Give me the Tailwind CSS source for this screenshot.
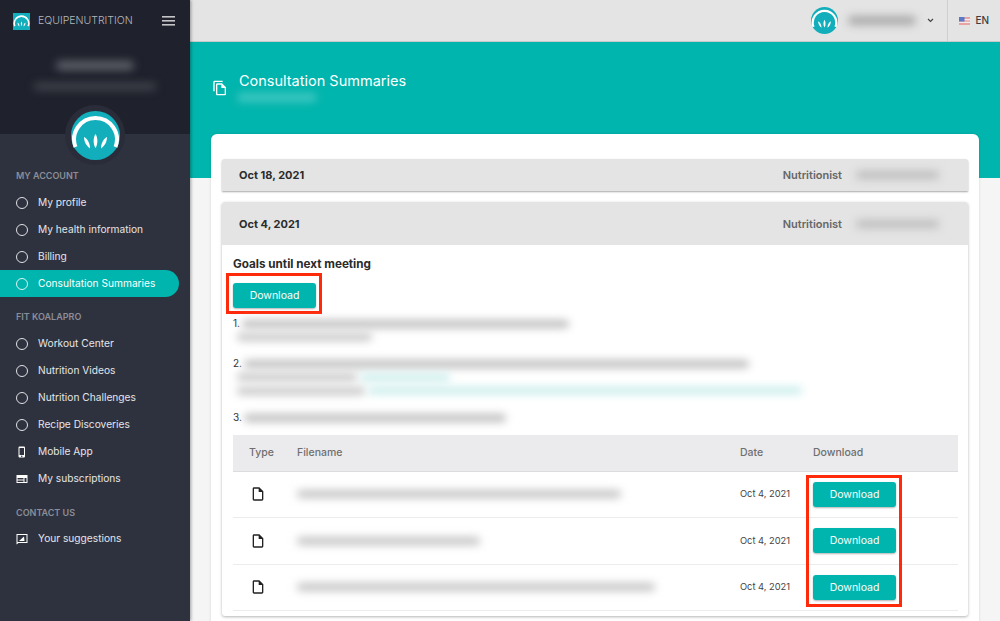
<!DOCTYPE html>
<html lang="en">
<head>
    <meta charset="UTF-8">
    <title>Consultation Summaries</title>
    <script src="https://cdn.jsdelivr.net/npm/@tailwindcss/browser@4"></script>
</head>
<body class="font-['Inter',sans-serif] bg-[#f5f5f5] overflow-hidden">
<div class="flex w-[1000px] h-[621px] overflow-hidden">

    <!-- Sidebar -->
    <aside class="w-[190px] shrink-0 h-full bg-[#2e323f] shadow-[1px_0_3px_rgba(0,0,0,0.35)] z-10 relative">
        <div class="relative h-[134px] bg-[#1f222c]">
            <div class="flex items-center h-[42px] pl-[13px] pr-[15px]">
                <svg class="w-[17px] h-[17px]" viewBox="0 0 48 48"><rect width="48" height="48" fill="#12aebb"/><path d="M5 37A20.500 20.500 0 1 1 43 37" fill="none" stroke="#fff" stroke-width="4.500"/><path d="M24 24C26.500 28 26.500 33 24 37C21.500 33 21.500 28 24 24Z" fill="#fff"/><path d="M13 27C16.500 29 18.500 33 18 38C14.500 35.500 12.500 31.500 13 27Z" fill="#fff"/><path d="M35 27C31.500 29 29.500 33 30 38C33.500 35.500 35.500 31.500 35 27Z" fill="#fff"/></svg>
                <span class="ml-2 text-[10.500px] font-light text-[#b5b7bd]">EQUIPENUTRITION</span>
                <svg class="ml-auto w-[13px] h-[10px]" viewBox="0 0 13 10" fill="#c4c5c9"><rect width="13" height="1.600"/><rect y="4" width="13" height="1.600"/><rect y="8" width="13" height="1.600"/></svg>
            </div>
            <div class="mx-auto mt-[19px] w-[78px] h-[9px] rounded-full bg-[#5f616a] blur-[4px]"></div>
            <div class="mx-auto mt-[13px] w-[122px] h-[7px] rounded-full bg-[#43454e] blur-[4px]"></div>
            <!-- avatar -->
            <div class="absolute left-[65px] top-[105px] w-[60px] h-[60px] rounded-full bg-[#2a2d39] flex items-center justify-center">
                <svg class="w-[49px] h-[49px]" viewBox="0 0 49 49"><circle cx="24.500" cy="24.500" r="24.500" fill="#12aebb"/><path d="M4.500 36A21.400 21.400 0 1 1 44.500 36" fill="none" stroke="#fff" stroke-width="4"/><path d="M24.500 23C27 27 27 33 24.500 37C22 33 22 27 24.500 23Z" fill="#fff"/><path d="M13 26C16.500 28 19 32 19 37.500C15.500 35 13 31 13 26Z" fill="#fff"/><path d="M36 26C32.500 28 30 32 30 37.500C33.500 35 36 31 36 26Z" fill="#fff"/></svg>
            </div>
        </div>

        <nav class="pt-[34px] text-[10.200px] text-[#e4e5e8]">
            <h3 class="h-[14px] leading-[15px] pl-4 text-[9px] font-semibold text-[#8b8e97]">MY ACCOUNT</h3>
            <ul class="mt-[7px]">
                <li class="flex items-center h-[27px] pl-4"><span class="w-3 h-3 rounded-full border-[1.500px] border-white/85"></span><span class="ml-[10px]">My profile</span></li>
                <li class="flex items-center h-[27px] pl-4"><span class="w-3 h-3 rounded-full border-[1.500px] border-white/85"></span><span class="ml-[10px]">My health information</span></li>
                <li class="flex items-center h-[27px] pl-4"><span class="w-3 h-3 rounded-full border-[1.500px] border-white/85"></span><span class="ml-[10px]">Billing</span></li>
                <li class="flex items-center h-[27px] pl-4 w-[179px] bg-[#00b5ad] rounded-r-full text-white"><span class="w-3 h-3 rounded-full border-[1.500px] border-white/85"></span><span class="ml-[10px]">Consultation Summaries</span></li>
            </ul>
            <h3 class="mt-[12px] h-[14px] leading-[15px] pl-4 text-[9px] font-semibold text-[#8b8e97]">FIT KOALAPRO</h3>
            <ul class="mt-[7px]">
                <li class="flex items-center h-[27px] pl-4"><span class="w-3 h-3 rounded-full border-[1.500px] border-white/85"></span><span class="ml-[10px]">Workout Center</span></li>
                <li class="flex items-center h-[27px] pl-4"><span class="w-3 h-3 rounded-full border-[1.500px] border-white/85"></span><span class="ml-[10px]">Nutrition Videos</span></li>
                <li class="flex items-center h-[27px] pl-4"><span class="w-3 h-3 rounded-full border-[1.500px] border-white/85"></span><span class="ml-[10px]">Nutrition Challenges</span></li>
                <li class="flex items-center h-[27px] pl-4"><span class="w-3 h-3 rounded-full border-[1.500px] border-white/85"></span><span class="ml-[10px]">Recipe Discoveries</span></li>
                <li class="flex items-center h-[27px] pl-4">
                    <svg class="w-3 h-3" viewBox="0 0 24 24" fill="#fff"><path d="M15.500 1h-8C6.120 1 5 2.120 5 3.500v17C5 21.880 6.120 23 7.500 23h8c1.380 0 2.500-1.120 2.500-2.500v-17C18 2.120 16.880 1 15.500 1zm-4 21c-.83 0-1.500-.67-1.500-1.500s.67-1.500 1.500-1.500 1.500.67 1.500 1.500-.67 1.500-1.500 1.500zm4.500-4H7V4h9v14z"/></svg>
                    <span class="ml-[10px]">Mobile App</span></li>
                <li class="flex items-center h-[27px] pl-4">
                    <svg class="w-3 h-3" viewBox="0 0 24 24" fill="#fff" fill-rule="evenodd"><path d="M1 4h22v16H1zM3 10v3h12v-3zM3 15v3h12v-3zM17 10v8h4v-8z"/></svg>
                    <span class="ml-[10px]">My subscriptions</span></li>
            </ul>
            <h3 class="mt-[13px] h-[14px] leading-[15px] pl-4 text-[9px] font-semibold text-[#8b8e97]">CONTACT US</h3>
            <ul class="mt-[6px]">
                <li class="flex items-center h-[27px] pl-4">
                    <svg class="w-3 h-3" viewBox="0 0 24 24" fill="#fff" fill-rule="evenodd"><path d="M1 2h22v18H5l-4 3zM3 4v14.500L4.500 18H21V4z"/><path d="M6 16l10-9 1 9z"/></svg>
                    <span class="ml-[10px]">Your suggestions</span></li>
            </ul>
        </nav>
    </aside>

    <!-- Main -->
    <div class="flex-1 min-w-0 h-full">
        <header class="flex items-center justify-end h-[42px] bg-[#e4e4e4] border-b border-[#c9c9c9]">
            <svg class="w-[27px] h-[27px]" viewBox="0 0 49 49"><circle cx="24.500" cy="24.500" r="24.500" fill="#12aebb"/><path d="M4.500 36A21.400 21.400 0 1 1 44.500 36" fill="none" stroke="#fff" stroke-width="4"/><path d="M24.500 23C27 27 27 33 24.500 37C22 33 22 27 24.500 23Z" fill="#fff"/><path d="M13 26C16.500 28 19 32 19 37.500C15.500 35 13 31 13 26Z" fill="#fff"/><path d="M36 26C32.500 28 30 32 30 37.500C33.500 35 36 31 36 26Z" fill="#fff"/></svg>
            <div class="ml-[10px] w-[68px] h-[9px] rounded-full bg-[#a9a9a9] blur-[4px]"></div>
            <svg class="ml-[11px] w-[7px] h-[5px]" viewBox="0 0 7 5" fill="none" stroke="#444" stroke-width="1.200"><path d="M1 1l2.500 2.500L6 1"/></svg>
            <div class="ml-[13px] h-full pl-[11px] pr-[11px] border-l border-[#cfcfcf] flex items-center">
                <svg class="w-[11px] h-[8px] blur-[0.4px]" viewBox="0 0 11 8"><rect width="11" height="8" fill="#e8a3a3"/><rect y="2" width="11" height="1.300" fill="#f4e9e9"/><rect y="4.700" width="11" height="1.300" fill="#f4e9e9"/><rect width="5.500" height="4.500" fill="#5a78c8"/></svg>
                <span class="ml-[5px] text-[10px] font-medium text-[#3d3d3d]">EN</span>
            </div>
        </header>

        <section class="h-[136px] bg-[#00b5ad] pl-[22px] pt-[30px] flex items-start">
            <svg class="mt-[8px] w-4 h-4" viewBox="0 0 24 24" fill="#fff"><path d="M16 1H4c-1.100 0-2 .9-2 2v14h2V3h12V1zm-1 4H8c-1.100 0-1.990.9-1.990 2L6 21c0 1.100.89 2 1.990 2H19c1.100 0 2-.9 2-2V11l-6-6zM8 21V7h6v5h5v9H8z"/></svg>
            <div class="ml-[11px]">
                <h1 class="text-[14.500px] leading-[18px] text-white">Consultation Summaries</h1>
                <div class="-ml-[2px] mt-[3px] w-[80px] h-[9px] rounded-full bg-white/25 blur-[4px]"></div>
            </div>
        </section>

        <main class="relative -mt-[44px] mx-[21px] h-[600px] bg-white rounded-t-[6px] px-[11px] pt-[25px] shadow-[0_0_3px_rgba(0,0,0,0.12)]">
            <div class="flex items-center justify-between h-[32px] pl-[17px] pr-[29px] bg-[#e4e4e4] rounded-t-[3px] shadow-[0_1px_2px_rgba(0,0,0,0.35)]">
                <span class="text-[11px] font-bold text-[#2b2b2b]">Oct 18, 2021</span>
                <div class="flex items-center"><span class="text-[11px] font-semibold text-[#666]">Nutritionist</span><div class="ml-[14px] w-[83px] h-[8px] rounded-full bg-[#bdbdbd] blur-[4px]"></div></div>
            </div>

            <div class="mt-[11px] w-[746px] h-[414px] rounded-[3px] shadow-[0_1px_3px_rgba(0,0,0,0.3)] bg-white">
                <div class="flex items-center justify-between h-[43px] pt-[1px] pl-[17px] pr-[29px] bg-[#e4e4e4] rounded-t-[3px]">
                    <span class="text-[11px] font-bold text-[#2b2b2b]">Oct 4, 2021</span>
                    <div class="flex items-center"><span class="text-[11px] font-semibold text-[#666]">Nutritionist</span><div class="ml-[14px] w-[83px] h-[8px] rounded-full bg-[#bdbdbd] blur-[4px]"></div></div>
                </div>
                <div class="px-[11px]">
                    <h2 class="mt-[12px] text-[11.700px] leading-[14px] font-bold text-[#2b2b2b]">Goals until next meeting</h2>
                    <div class="relative mt-[10px] w-[83px]">
                        <button class="w-[83px] h-[25px] bg-[#00b5ad] rounded-[3px] text-white text-[10.500px] shadow-[0_1px_2px_rgba(0,0,0,0.3)]">Download</button>
                        <div class="absolute -left-[7px] -right-[6px] -top-[8px] -bottom-[6px] border-[3px] border-[#ff2a0a]"></div>
                    </div>

                    <div class="mt-[9px] text-[10px] text-[#333]">
                        <div class="flex items-center h-[13px]"><span>1.</span><div class="ml-[2px] w-[327px] h-[8px] rounded-full bg-[#bebebe] blur-[4px]"></div></div>
                        <div class="flex items-center h-[13px] pl-[4px]"><div class="w-[135px] h-[8px] rounded-full bg-[#c8c8c8] blur-[4px]"></div></div>

                        <div class="mt-[14px] flex items-center h-[13px]"><span>2.</span><div class="ml-[2px] w-[505px] h-[8px] rounded-full bg-[#bebebe] blur-[4px]"></div></div>
                        <div class="flex items-center h-[14px] pl-[4px]"><div class="w-[120px] h-[8px] rounded-full bg-[#c8c8c8] blur-[4px]"></div><div class="ml-[3px] w-[90px] h-[7px] rounded-full bg-[#c6ecea] blur-[4px]"></div></div>
                        <div class="flex items-center h-[13px] pl-[4px]"><div class="w-[128px] h-[8px] rounded-full bg-[#c8c8c8] blur-[4px]"></div><div class="ml-[3px] w-[434px] h-[7px] rounded-full bg-[#c6ecea] blur-[4px]"></div></div>

                        <div class="mt-[14px] flex items-center h-[13px]"><span>3.</span><div class="ml-[2px] w-[262px] h-[8px] rounded-full bg-[#bebebe] blur-[4px]"></div></div>
                    </div>

                    <!-- Files table -->
                    <div class="relative mt-[11px]">
                        <table class="w-[725px] table-fixed text-[10.500px]">
                            <thead>
                                <tr class="h-[36px] bg-[#ebebed] border-b border-[#dcdcdc] text-left text-[#6f6f6f]">
                                    <th class="w-[64px] pl-4 font-medium">Type</th>
                                    <th class="w-[443px] font-medium">Filename</th>
                                    <th class="w-[73px] font-medium">Date</th>
                                    <th class="font-medium">Download</th>
                                </tr>
                            </thead>
                            <tbody class="text-[#444]">
                                <tr class="h-[46px] border-b border-[#ececec]">
                                    <td class="pl-[17px]"><svg class="w-4 h-4" viewBox="0 0 24 24" fill="#222"><path d="M14 2H6c-1.100 0-1.990.9-1.990 2L4 20c0 1.100.89 2 1.990 2H18c1.100 0 2-.9 2-2V8l-6-6zM6 20V4h7v5h5v11H6z"/></svg></td>
                                    <td><div class="w-[324px] h-[8px] rounded-full bg-[#c4c4c4] blur-[4px]"></div></td>
                                    <td class="text-[9.300px]">Oct 4, 2021</td>
                                    <td><button class="w-[83px] h-[25px] bg-[#00b5ad] rounded-[3px] text-white text-[10.500px] shadow-[0_1px_2px_rgba(0,0,0,0.3)]">Download</button></td>
                                </tr>
                                <tr class="h-[47px] border-b border-[#ececec]">
                                    <td class="pl-[17px]"><svg class="w-4 h-4" viewBox="0 0 24 24" fill="#222"><path d="M14 2H6c-1.100 0-1.990.9-1.990 2L4 20c0 1.100.89 2 1.990 2H18c1.100 0 2-.9 2-2V8l-6-6zM6 20V4h7v5h5v11H6z"/></svg></td>
                                    <td><div class="w-[183px] h-[8px] rounded-full bg-[#c4c4c4] blur-[4px]"></div></td>
                                    <td class="text-[9.300px]">Oct 4, 2021</td>
                                    <td><button class="w-[83px] h-[25px] bg-[#00b5ad] rounded-[3px] text-white text-[10.500px] shadow-[0_1px_2px_rgba(0,0,0,0.3)]">Download</button></td>
                                </tr>
                                <tr class="h-[46px] border-b border-[#ececec]">
                                    <td class="pl-[17px]"><svg class="w-4 h-4" viewBox="0 0 24 24" fill="#222"><path d="M14 2H6c-1.100 0-1.990.9-1.990 2L4 20c0 1.100.89 2 1.990 2H18c1.100 0 2-.9 2-2V8l-6-6zM6 20V4h7v5h5v11H6z"/></svg></td>
                                    <td><div class="w-[358px] h-[8px] rounded-full bg-[#c4c4c4] blur-[4px]"></div></td>
                                    <td class="text-[9.300px]">Oct 4, 2021</td>
                                    <td><button class="w-[83px] h-[25px] bg-[#00b5ad] rounded-[3px] text-white text-[10.500px] shadow-[0_1px_2px_rgba(0,0,0,0.3)]">Download</button></td>
                                </tr>
                            </tbody>
                        </table>
                        <div class="absolute left-[573px] top-[40px] w-[96px] h-[132px] border-[3px] border-[#ff2a0a]"></div>
                    </div>
                </div>
            </div>
        </main>
    </div>
</div>
</body>
</html>
